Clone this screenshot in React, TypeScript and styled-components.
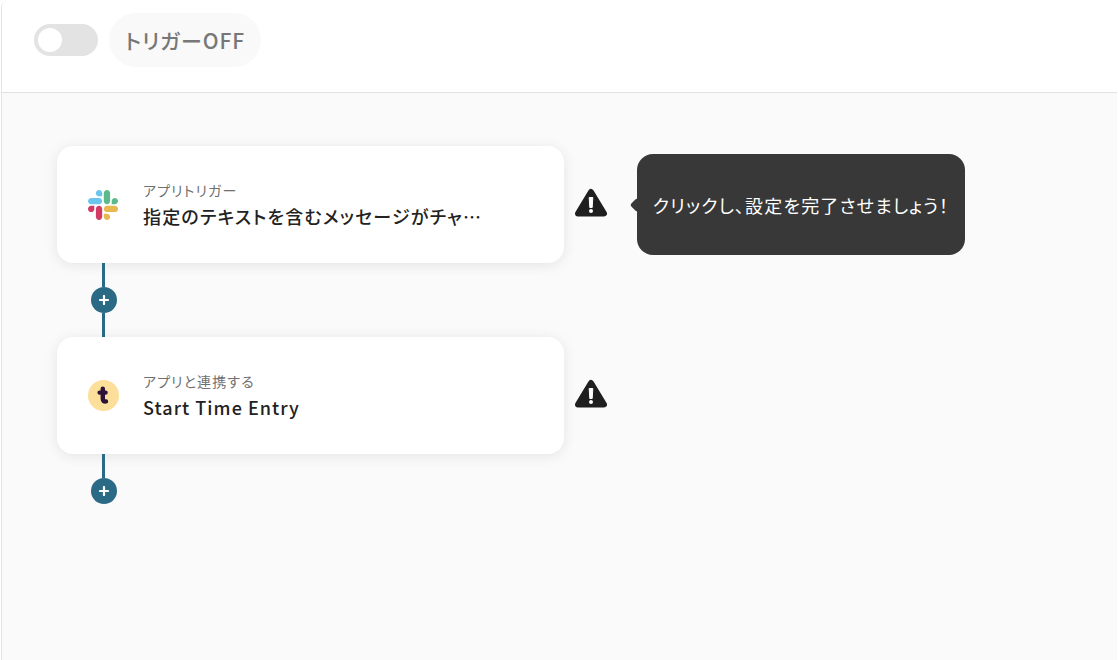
import React from 'react'
import styled, { createGlobalStyle } from 'styled-components'

const Global = createGlobalStyle`
  html, body { margin: 0; padding: 0; background: #fff; }
  body {
    font-family: "Noto Sans CJK JP", "Noto Sans", sans-serif;
    font-feature-settings: "palt";
  }
`

const SlackLogo = () => (
  <svg width="30" height="30" viewBox="0 0 122.8 122.8">
    <path fill="#d23c64" d="M25.8 77.6c0 7.1-5.8 12.9-12.9 12.9S0 84.7 0 77.6s5.8-12.9 12.9-12.9h12.9v12.9z" />
    <path fill="#d23c64" d="M32.3 77.6c0-7.1 5.8-12.9 12.9-12.9s12.9 5.8 12.9 12.9v32.3c0 7.1-5.8 12.9-12.9 12.9s-12.9-5.8-12.9-12.9V77.6z" />
    <path fill="#6cc5ec" d="M45.2 25.8c-7.1 0-12.9-5.8-12.9-12.9S38.1 0 45.2 0s12.9 5.8 12.9 12.9v12.9H45.2z" />
    <path fill="#6cc5ec" d="M45.2 32.3c7.1 0 12.9 5.8 12.9 12.9s-5.8 12.9-12.9 12.9H12.9C5.8 58.1 0 52.3 0 45.2s5.8-12.9 12.9-12.9h32.3z" />
    <path fill="#5cb98c" d="M97 45.2c0-7.1 5.8-12.9 12.9-12.9s12.9 5.8 12.9 12.9-5.8 12.9-12.9 12.9H97V45.2z" />
    <path fill="#5cb98c" d="M90.5 45.2c0 7.1-5.8 12.9-12.9 12.9s-12.9-5.8-12.9-12.9V12.9C64.7 5.8 70.5 0 77.6 0s12.9 5.8 12.9 12.9v32.3z" />
    <path fill="#e6b84f" d="M77.6 97c7.1 0 12.9 5.8 12.9 12.9s-5.8 12.9-12.9 12.9-12.9-5.8-12.9-12.9V97h12.9z" />
    <path fill="#e6b84f" d="M77.6 90.5c-7.1 0-12.9-5.8-12.9-12.9s5.8-12.9 12.9-12.9h32.3c7.1 0 12.9 5.8 12.9 12.9s-5.8 12.9-12.9 12.9H77.6z" />
  </svg>
)

const TogglLogo = () => (
  <svg width="31" height="31" viewBox="0 0 31 31">
    <circle cx="15.5" cy="15.5" r="15.5" fill="#fbdf9b" />
    <path d="M14.8 8.6v10.2c0 2 1 2.8 3.2 2.6M11.6 12.6h6" fill="none" stroke="#2c1338" strokeWidth="4.4" strokeLinecap="round" />
  </svg>
)

const WarnIcon = () => (
  <svg width="32" height="29" viewBox="0 0 32 29">
    <path d="M16 4 L29 25.5 H3 Z" fill="#1f1f1f" stroke="#1f1f1f" strokeWidth="6" strokeLinejoin="round" />
    <path d="M14.2 9.5h3.6l-.6 10h-2.4z" fill="#fff" stroke="#fff" strokeWidth="1" strokeLinejoin="round" />
    <circle cx="16" cy="23" r="2" fill="#fff" />
  </svg>
)

const PlusDot = () => (
  <Dot>
    <svg width="10" height="10" viewBox="0 0 10 10">
      <path d="M5 1v8M1 5h8" stroke="#fff" strokeWidth="2.2" strokeLinecap="round" />
    </svg>
  </Dot>
)

const App = () => {
  return (
    <Page>
      <Global />
      <Header>
        <Toggle>
          <Knob />
        </Toggle>
        <StatusPill>トリガーOFF</StatusPill>
      </Header>
      <Canvas>
        <StepRow>
          <Card>
            <LogoSlot>
              <SlackLogo />
            </LogoSlot>
            <CardText>
              <CardLabel>アプリトリガー</CardLabel>
              <CardTitle $spacing={1.2}>指定のテキストを含むメッセージがチャ…</CardTitle>
            </CardText>
          </Card>
          <WarnSlot>
            <WarnIcon />
          </WarnSlot>
          <Tooltip>クリックし、設定を完了させましょう！</Tooltip>
        </StepRow>
        <Connector>
          <Line $h={24} />
          <PlusDot />
          <Line $h={24} />
        </Connector>
        <StepRow>
          <Card>
            <LogoSlot>
              <TogglLogo />
            </LogoSlot>
            <CardText>
              <CardLabel>アプリと連携する</CardLabel>
              <CardTitle $spacing={1.05}>Start Time Entry</CardTitle>
            </CardText>
          </Card>
          <WarnSlot>
            <WarnIcon />
          </WarnSlot>
        </StepRow>
        <Connector>
          <Line $h={24} />
          <PlusDot />
        </Connector>
      </Canvas>
    </Page>
  )
}

export default App

const Page = styled.div`
  width: 1116px;
  height: 660px;
  margin-left: 1px;
  display: flex;
  flex-direction: column;
  box-sizing: border-box;
  border-left: 1px solid #e4e4e4;
  border-top-left-radius: 8px;
  overflow: hidden;
`

const Header = styled.div`
  height: 93px;
  flex-shrink: 0;
  box-sizing: border-box;
  display: flex;
  align-items: center;
  padding: 0 0 13px 32px;
  gap: 11px;
  border-bottom: 1px solid #e2e2e2;
  background: #fff;
`

const Toggle = styled.div`
  width: 64px;
  height: 32px;
  border-radius: 16px;
  background: #e3e3e3;
  display: flex;
  align-items: center;
  padding-left: 4px;
  box-sizing: border-box;
`

const Knob = styled.div`
  width: 24px;
  height: 24px;
  border-radius: 50%;
  background: #fff;
`

const StatusPill = styled.div`
  height: 54px;
  width: 152px;
  box-sizing: border-box;
  padding-left: 16px;
  border-radius: 27px;
  background: #f9f9f9;
  color: #777777;
  font-size: 21px;
  font-weight: 500;
  display: flex;
  align-items: center;
  letter-spacing: 0.9px;
`

const Canvas = styled.div`
  flex: 1;
  background: #fafafa;
  padding: 53px 0 0 55px;
  display: flex;
  flex-direction: column;
  align-items: flex-start;
`

const StepRow = styled.div`
  display: flex;
  align-items: center;
`

const Card = styled.div`
  width: 507px;
  height: 117px;
  box-sizing: border-box;
  border-radius: 16px;
  background: #fff;
  box-shadow: 0 2px 14px rgba(0, 0, 0, 0.09);
  display: flex;
  align-items: center;
  padding-left: 31px;
  gap: 24px;
`

const LogoSlot = styled.div`
  width: 31px;
  height: 31px;
  display: flex;
  align-items: flex-end;
`

const CardText = styled.div`
  display: flex;
  flex-direction: column;
  gap: 3px;
  margin-top: 2px;
`

const CardLabel = styled.div`
  font-size: 14px;
  line-height: 19px;
  color: #707070;
  letter-spacing: 1.1px;
`

const CardTitle = styled.div<{ $spacing: number }>`
  font-size: 18px;
  line-height: 27px;
  font-weight: 500;
  color: #222222;
  letter-spacing: ${(p) => p.$spacing}px;
`

const WarnSlot = styled.div`
  width: 32px;
  height: 29px;
  margin: -5px 0 0 11px;
  display: flex;
`

const Tooltip = styled.div`
  position: relative;
  margin-left: 30px;
  width: 328px;
  height: 101px;
  box-sizing: border-box;
  border-radius: 16px;
  background: #383838;
  color: #fff;
  font-size: 18px;
  letter-spacing: 1.15px;
  display: flex;
  align-items: center;
  justify-content: center;
  white-space: nowrap;

  &::before {
    content: "";
    position: absolute;
    left: -5px;
    top: 46px;
    width: 10px;
    height: 10px;
    border-radius: 2px;
    background: #383838;
    transform: rotate(45deg);
  }
`

const Connector = styled.div`
  width: 26px;
  margin-left: 34px;
  display: flex;
  flex-direction: column;
  align-items: center;
`

const Line = styled.div<{ $h: number }>`
  width: 3px;
  height: ${(p) => p.$h}px;
  margin-right: 1px;
  background: #2b6a85;
`

const Dot = styled.div`
  width: 26px;
  height: 26px;
  border-radius: 50%;
  background: #2b6a85;
  display: flex;
  align-items: center;
  justify-content: center;
`
